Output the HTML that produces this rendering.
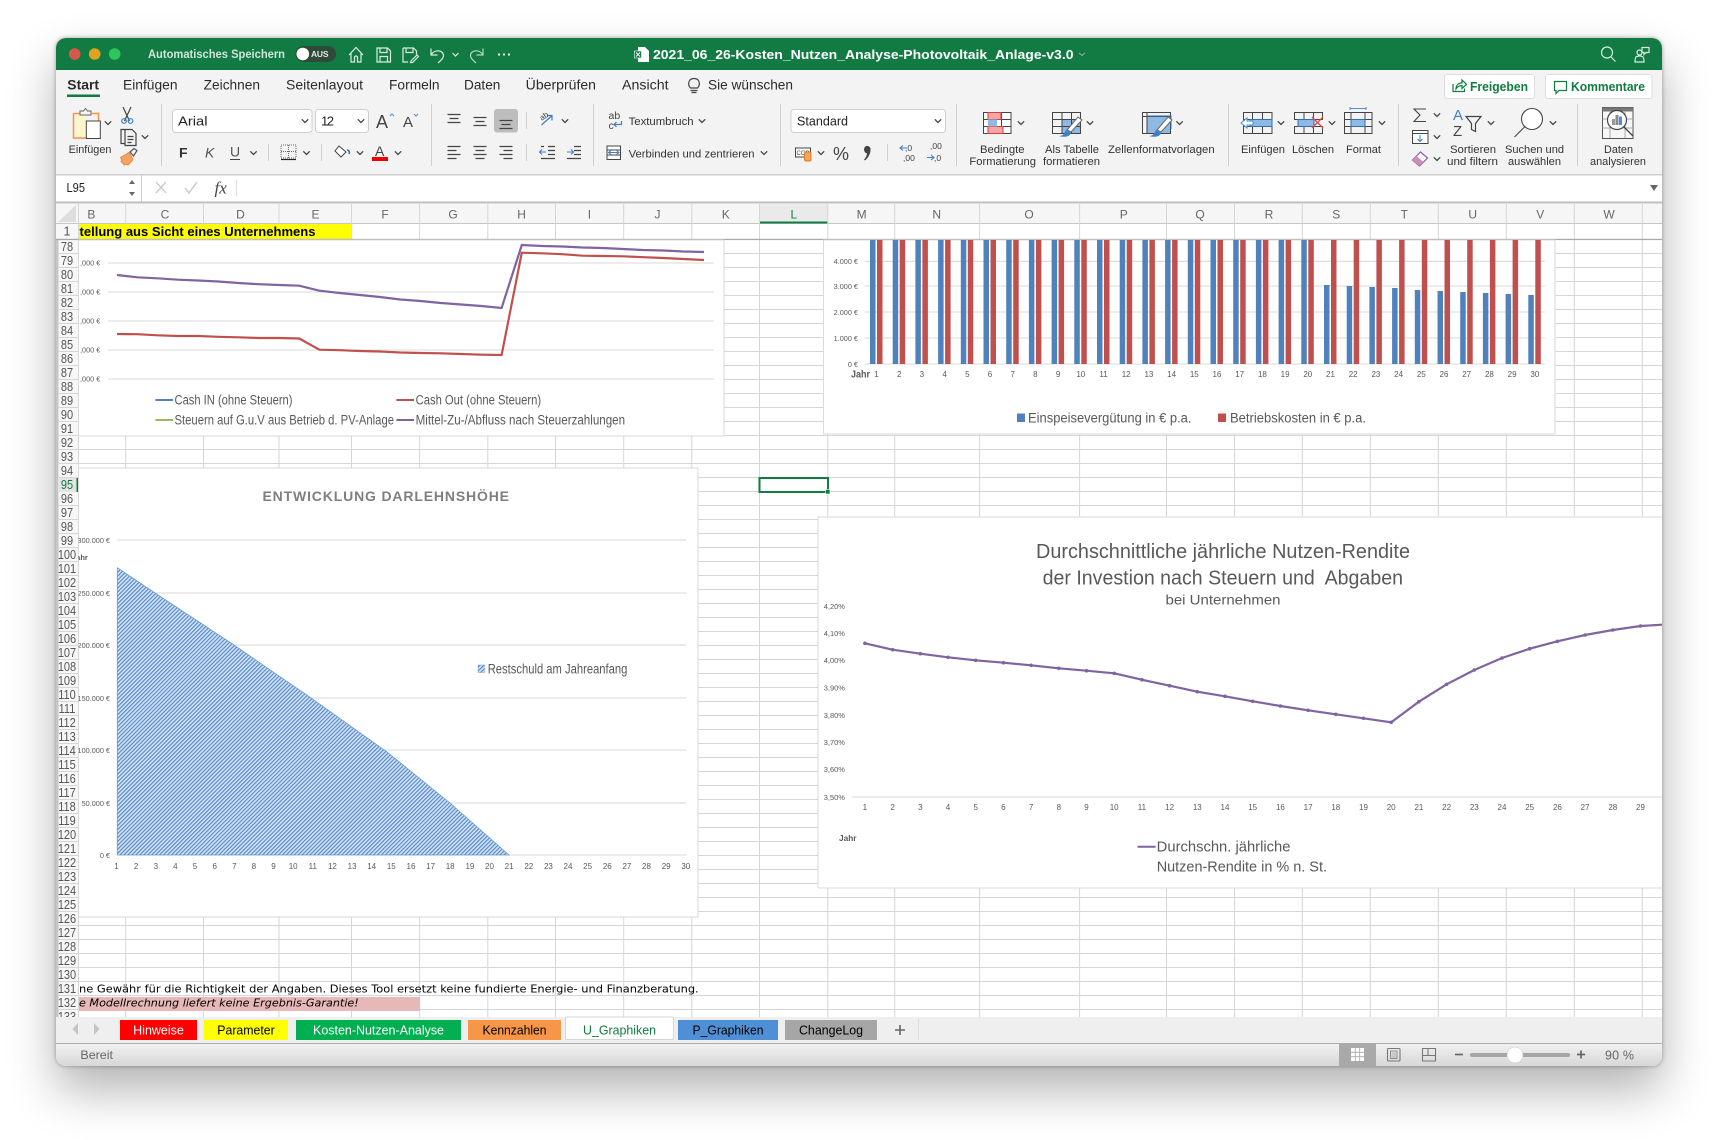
<!DOCTYPE html>
<html lang="de"><head><meta charset="utf-8"><title>Excel</title>
<style>
html,body{margin:0;padding:0;background:#fff;width:1718px;height:1140px;overflow:hidden}
#win{position:absolute;left:56px;top:38px;width:1606px;height:1028px;border-radius:10px;box-shadow:0 24px 48px rgba(0,0,0,.3),0 0 4px rgba(0,0,0,.35)}
svg{position:absolute;left:0;top:0}
svg text{font-family:"Liberation Sans",sans-serif}
#rows{position:absolute;left:47px;top:240px;width:40px;height:777px;overflow:hidden;text-align:center;font:12.5px/14px "Liberation Sans",sans-serif;color:#555;transform:scaleX(.88)}
.tab{font-size:13.5px;fill:#2b2b2b}
.rb{font-size:11px;fill:#333}
.ch{font-size:12px;fill:#666;text-anchor:middle}
.ax{font-size:8px;fill:#595959;text-anchor:middle}
.ay{font-size:7.3px;fill:#595959;text-anchor:end}
.lg{font-size:13.5px;fill:#595959}
.ic{fill:none;stroke:#444;stroke-width:1.2}
.wi{fill:none;stroke:#dcebe2;stroke-width:1.2}
</style></head><body>
<div id="win"></div>
<svg width="1718" height="1140" viewBox="0 0 1718 1140" xmlns="http://www.w3.org/2000/svg">
<defs>
<clipPath id="w"><rect x="56" y="38" width="1606" height="1028" rx="10"/></clipPath>
<clipPath id="c3"><rect x="78.5" y="468" width="620" height="449"/></clipPath>
<path id="c" d="M-3.2-1.7L0 1.5L3.2-1.7" fill="none" stroke="#444" stroke-width="1.3"/>
<pattern id="hl" x="58" y="240" width="1604" height="14" patternUnits="userSpaceOnUse"><path d="M0 13.5H1604" stroke="#d6d6d6"/></pattern>
<pattern id="hat" width="2.8" height="2.8" patternUnits="userSpaceOnUse" patternTransform="rotate(45)"><rect width="2.8" height="2.8" fill="#d3e2f4"/><rect width="1.1" height="2.8" fill="#4f86c8"/></pattern>
<marker id="m" markerWidth="5" markerHeight="5" refX="2.5" refY="2.5" markerUnits="userSpaceOnUse"><circle cx="2.5" cy="2.5" r="1.8" fill="#8064a2"/></marker>
</defs>
<g clip-path="url(#w)">
<rect x="56" y="38" width="1606" height="1028" fill="#fff"/>
<!-- title bar -->
<rect x="56" y="38" width="1606" height="32" fill="#117b43"/>
<circle cx="74.7" cy="54" r="5.8" fill="#d8574c"/><circle cx="94.7" cy="54" r="5.8" fill="#e0a223"/><circle cx="114.7" cy="54" r="5.8" fill="#2fc45c"/>
<text x="148" y="58" font-size="11.5" font-weight="bold" fill="#d2e4da" textLength="137" lengthAdjust="spacingAndGlyphs">Automatisches Speichern</text>
<rect x="295.5" y="46" width="40.5" height="16" rx="8" fill="#2f4a3a"/><circle cx="302.8" cy="54" r="6.3" fill="#fff"/>
<text x="311" y="57" font-size="8.5" font-weight="bold" fill="#dfe8e3" textLength="17.5">AUS</text>
<path class="wi" d="M349 55l7-7.5 7 7.5M351 53v9h3.5v-4.5a1.5 1.500 0 0 1 3 0V62H361v-9"/>
<path class="wi" d="M377 48h10.500l3 3v11H377zM380 48v4.500h7V48M380 62v-5.500h7.500V62"/>
<path class="wi" d="M403 48h10.500l3 3v3.500M403 48v14h5M406 48v4.500h7V48M411 61l6-6 1.500 1.500-6 6h-2z"/>
<path class="wi" d="M431 48.500v6.500h6.500M431.500 54.500c3-5.500 12-4.500 12 1 0 3-2.500 4.500-5.500 7.500"/>
<path d="M452.500 53l3 3 3-3" fill="none" stroke="#dcebe2" stroke-width="1.200"/>
<path class="wi" d="M483 48.500v6.500h-6.500M482.500 54.500c-3-5.500-12-4.500-12 1 0 3 2.500 4.500 5.500 7.500" opacity=".8"/>
<circle cx="499" cy="54.500" r="1.100" fill="#fff"/><circle cx="504" cy="54.500" r="1.100" fill="#fff"/><circle cx="509" cy="54.500" r="1.100" fill="#fff"/>
<path d="M638 47h7l4 4v11h-11z" fill="#fff"/><rect x="634.500" y="51" width="7" height="7" fill="#117b43" stroke="#fff" stroke-width=".6"/><path d="M636 52.500l4 4M640 52.500l-4 4" stroke="#fff" stroke-width=".9"/>
<text x="653" y="59" font-size="13" font-weight="bold" fill="#fff" textLength="420.500" lengthAdjust="spacingAndGlyphs">2021_06_26-Kosten_Nutzen_Analyse-Photovoltaik_Anlage-v3.0</text>
<path d="M1079 53l3 2.500 3-2.500" fill="none" stroke="#8db9a0" stroke-width="1"/>
<circle cx="1607" cy="52.500" r="5.500" class="wi"/><path class="wi" d="M1611 57l4.500 4.500"/>
<path class="wi" d="M1635 62c0-5 1-6 4.500-6s4.500 1 4.500 6zM1642 47.500h7v5h-3l-2 2v-2h-2z"/><circle cx="1639.500" cy="52.500" r="2.500" class="wi"/>
<!-- ribbon -->
<rect x="56" y="70" width="1606" height="104" fill="#f3f3f3"/>
<rect x="56" y="174" width="1606" height="1.500" fill="#cfcfcf"/>
<g class="tab">
<text x="67.300" y="89.500" font-weight="bold" textLength="31.700" lengthAdjust="spacingAndGlyphs">Start</text>
<text x="123" y="89.500" textLength="54.500" lengthAdjust="spacingAndGlyphs">Einfügen</text>
<text x="203.700" y="89.500" textLength="56.300" lengthAdjust="spacingAndGlyphs">Zeichnen</text>
<text x="286" y="89.500" textLength="77" lengthAdjust="spacingAndGlyphs">Seitenlayout</text>
<text x="389" y="89.500" textLength="50.600" lengthAdjust="spacingAndGlyphs">Formeln</text>
<text x="464" y="89.500" textLength="36.400" lengthAdjust="spacingAndGlyphs">Daten</text>
<text x="525.700" y="89.500" textLength="70.300" lengthAdjust="spacingAndGlyphs">Überprüfen</text>
<text x="622" y="89.500" textLength="46.600" lengthAdjust="spacingAndGlyphs">Ansicht</text>
<text x="708" y="89.500" textLength="85" lengthAdjust="spacingAndGlyphs">Sie wünschen</text>
</g>
<rect x="67" y="94.500" width="33" height="2.500" fill="#107c41"/>
<path class="ic" d="M690.500 90.500h7M691.500 92.500h5M690.500 88c-3-3-2.500-9.500 3.500-9.500s6.500 6.500 3.500 9.500z" stroke="#666"/>
<rect x="1444.500" y="74.500" width="90" height="24" rx="2.500" fill="#fff" stroke="#dcdcdc"/>
<rect x="1545.500" y="74.500" width="106.500" height="24" rx="2.500" fill="#fff" stroke="#dcdcdc"/>
<path d="M1453 84v7.500h11.500v-3M1456 89c0-4 2.500-6 6-6v-3l4.500 4.500-4.500 4v-3c-2.500 0-4.500 1-6 3.500z" fill="none" stroke="#107c41" stroke-width="1.200"/>
<text x="1470" y="91" font-size="12.500" font-weight="bold" fill="#107c41" textLength="58" lengthAdjust="spacingAndGlyphs">Freigeben</text>
<path d="M1554.500 81.500h12v9h-7.500l-3 3v-3h-1.500z" fill="none" stroke="#107c41" stroke-width="1.200"/>
<text x="1571" y="91" font-size="12.500" font-weight="bold" fill="#107c41" textLength="74" lengthAdjust="spacingAndGlyphs">Kommentare</text>
<!-- ribbon separators -->
<path d="M161.500 104v62M431.500 104v62M593.500 104v62M780.500 104v62M956.500 104v62M1228.500 104v62M1398.500 104v62M1577.500 104v62" stroke="#d0d0d0"/>
<path d="M268.500 144v17M321.500 144v17M526.500 112v17M526.500 144v17M887.500 144v17" stroke="#d0d0d0"/>
<!-- clipboard -->
<path d="M73.500 113.500h6M92 113.500h6.500v7M73.500 113.500v24.500h13" fill="none" stroke="#f0954a" stroke-width="1.500"/>
<rect x="75" y="115" width="11" height="22" fill="#fdf6c8"/>
<path d="M80 113v-2h3.500l2-2.500 2 2.500h3.500v4h-11z" fill="#f5f5f5" stroke="#666"/>
<rect x="86.300" y="121" width="14" height="17.500" fill="#fff" stroke="#444"/>
<use href="#c" x="108" y="123"/>
<text class="rb" x="68.600" y="153" textLength="42.800" lengthAdjust="spacingAndGlyphs">Einfügen</text>
<path class="ic" d="M123 107l6.500 14M131 107l-6.500 14"/><circle cx="124" cy="121" r="2.300" class="ic" style="stroke:#3e7fc8"/><circle cx="130.500" cy="121" r="2.300" class="ic" style="stroke:#3e7fc8"/>
<path class="ic" d="M125 129.500h-4v14h4M125 129.500h7l4 4v12h-11zM127.500 136.500h6M127.500 139.500h6M127.500 142.500h4"/>
<use href="#c" x="145" y="137"/>
<path d="M120.500 157.500l8.500-5 4 7-5 5.500-3-1-.5 1-3.500-3.500 1-1z" fill="#f4a268" stroke="#e98a3a"/><path d="M130 152l4-3.500 3 2-3.500 5.500z" fill="none" stroke="#555" stroke-width="1.200"/>
<!-- font -->
<rect x="172.500" y="109.500" width="139.500" height="23" rx="3" fill="#fff" stroke="#cfcfcf"/>
<text x="178" y="125.500" font-size="13" fill="#222" textLength="29.500" lengthAdjust="spacingAndGlyphs">Arial</text><use href="#c" x="305" y="121"/>
<rect x="315.500" y="109.500" width="53" height="23" rx="3" fill="#fff" stroke="#cfcfcf"/>
<text x="321" y="125.500" font-size="13" fill="#222" textLength="13">12</text><use href="#c" x="361" y="121"/>
<text x="376" y="128" font-size="18" fill="#444">A</text><path d="M390 116l2-2 2 2" fill="none" stroke="#4a8fd8" stroke-width="1"/>
<text x="403" y="127" font-size="15" fill="#444">A</text><path d="M414 114l2 2 2-2" fill="none" stroke="#4a8fd8" stroke-width="1"/>
<text x="179" y="157.500" font-size="14" font-weight="bold" fill="#333">F</text>
<text x="205" y="157.500" font-size="14" font-style="italic" fill="#555">K</text>
<text x="230" y="156.500" font-size="14" fill="#555">U</text><path d="M230 159.500h10" stroke="#444"/>
<use href="#c" x="253.500" y="153"/>
<rect x="281" y="145" width="15" height="13" fill="none" stroke="#666" stroke-dasharray="1 1"/><path d="M288.500 145v13M281 151.500h15" stroke="#666" stroke-dasharray="1 1"/><path d="M281 159.500h15" stroke="#222" stroke-width="1.200"/>
<use href="#c" x="306.500" y="153"/>
<path d="M339 146l7 6-5 5-6-6z" fill="#fff" stroke="#444"/><path d="M347 150c2 0 3 2 2 4" fill="none" stroke="#2f6fb8" stroke-width="1.600"/>
<use href="#c" x="360" y="153"/>
<text x="375" y="156" font-size="14" fill="#444">A</text><rect x="372" y="157" width="16" height="4" fill="#ee0000"/>
<use href="#c" x="398" y="153"/>
<!-- align -->
<rect x="494" y="109" width="24" height="23.500" rx="3" fill="#bdbdbd"/>
<path class="ic" d="M447.500 114.500h13M449.500 118.500h9M447.500 122.500h13"/><path class="ic" d="M473.500 117.500h13M475.500 121.500h9M473.500 125.500h13"/><path class="ic" d="M499.500 120.500h13M501.500 124.500h9M499.500 128.500h13"/>
<path d="M541.500 125l10-9M547 115.500h5v5" fill="none" stroke="#3e7fc8" stroke-width="1.200"/><text x="540" y="119" font-size="8" fill="#444" transform="rotate(-35 544 117)">ab</text>
<use href="#c" x="565" y="121"/>
<path class="ic" d="M447.500 146.500h13M447.500 150.500h9M447.500 154.500h13M447.500 158.500h9"/><path class="ic" d="M473.500 146.500h13M475.500 150.500h9M473.500 154.500h13M475.500 158.500h9"/><path class="ic" d="M499.500 146.500h13M503.500 150.500h9M499.500 154.500h13M503.500 158.500h9"/>
<path class="ic" d="M548 146.500h7M548 150.500h7M548 154.500h7M541 158.500h14M541 146.500h3"/><path d="M546 152h-6M542 149.500l-2.500 2.500 2.500 2.500" fill="none" stroke="#3e7fc8" stroke-width="1.100"/>
<path class="ic" d="M574 146.500h7M574 150.500h7M574 154.500h7M567 158.500h14"/><path d="M567 152h6M571 149.500l2.500 2.500-2.500 2.500" fill="none" stroke="#3e7fc8" stroke-width="1.100"/>
<text x="608.500" y="119" font-size="10.500" fill="#444">ab</text><text x="608.500" y="129" font-size="10.500" fill="#444">c</text>
<path d="M621.500 121v3.500h-7M616.500 122l-2.500 2.500 2.500 2.500" fill="none" stroke="#3e7fc8" stroke-width="1.200"/>
<text class="rb" x="628.600" y="125" textLength="65" lengthAdjust="spacingAndGlyphs">Textumbruch</text><use href="#c" x="702" y="121"/>
<rect x="607" y="146" width="13.500" height="13.500" fill="#fff" stroke="#444"/><path d="M607 150h13.500M607 155h13.500" stroke="#444"/><path d="M608.500 152.500h10.500M611 150.500l-2.500 2 2.500 2M616.500 150.500l2.500 2-2.500 2" fill="none" stroke="#3e7fc8"/>
<text class="rb" x="628.600" y="157.500" textLength="126" lengthAdjust="spacingAndGlyphs">Verbinden und zentrieren</text><use href="#c" x="764" y="153"/>
<!-- number -->
<rect x="791" y="109.500" width="154.500" height="23" rx="3" fill="#fff" stroke="#cfcfcf"/>
<text x="797" y="125.500" font-size="13" fill="#222" textLength="51" lengthAdjust="spacingAndGlyphs">Standard</text><use href="#c" x="938" y="121"/>
<rect x="795.500" y="148" width="15" height="9" fill="#fff" stroke="#444"/><text x="796.500" y="155" font-size="6" fill="#444">CCC</text><rect x="804.500" y="152" width="6.500" height="9" rx="1.500" fill="#f2a55c" stroke="#e07c20"/>
<use href="#c" x="821" y="153"/>
<text x="833" y="160" font-size="18" fill="#444">%</text>
<path d="M864 149a3.300 3.300 0 1 1 6.500 1c0 4-2.500 8-5.500 10.500l-1-.8c1.800-2 2.800-4 3-6.500-1.700.2-3-1.900-3-4.200z" fill="#444"/>
<text x="905" y="151" font-size="8.500" fill="#444">,0</text><text x="903" y="161" font-size="8.500" fill="#444">,00</text><path d="M907 148h-6.500M903 145.500l-3 2.500 3 2.500" fill="none" stroke="#3e7fc8" stroke-width="1.100"/>
<text x="930" y="149" font-size="8.500" fill="#444">,00</text><text x="934" y="161" font-size="8.500" fill="#444">,0</text><path d="M927 157.500h6.500M931 155l3 2.500-3 2.500" fill="none" stroke="#3e7fc8" stroke-width="1.100"/>
<!-- cond format -->
<rect x="983.500" y="112.500" width="27.500" height="21" fill="#fff"/><path d="M983.500 112.500h27.500v21h-27.500zM983.500 119.500h27.500M983.500 126.500h27.500M992.500 112.500v21M1001.500 112.500v21" fill="none" stroke="#444"/>
<rect x="988" y="112.500" width="13" height="7" fill="#f1a7a7" stroke="#e23a3a"/><rect x="988" y="126.500" width="15" height="7" fill="#f1a7a7" stroke="#e23a3a"/><rect x="988" y="119.500" width="9" height="7" fill="#8db9e4"/>
<use href="#c" x="1021" y="123"/>
<text class="rb" x="980" y="153" textLength="44.500" lengthAdjust="spacingAndGlyphs">Bedingte</text>
<text class="rb" x="969.400" y="165" textLength="66.600" lengthAdjust="spacingAndGlyphs">Formatierung</text>
<!-- table -->
<rect x="1062" y="119" width="19" height="14" fill="#8db9e4"/><path d="M1052.500 112.500h28v21h-28zM1052.500 119.500h28M1052.500 126.500h28M1062 112.500v21M1071.500 112.500v21" fill="none" stroke="#444"/>
<path d="M1067 130l11-13 4 3-11 12z" fill="#fff" stroke="#666"/><path d="M1059 136c4 0 5-2 7-6l5 3c-1 3-5 5-12 3z" fill="#3e7fc8"/>
<use href="#c" x="1090" y="123"/>
<text class="rb" x="1045" y="153" textLength="54" lengthAdjust="spacingAndGlyphs">Als Tabelle</text>
<text class="rb" x="1043" y="165" textLength="57" lengthAdjust="spacingAndGlyphs">formatieren</text>
<rect x="1147" y="116" width="24" height="17" fill="#8db9e4"/><path d="M1142.500 112.500h28v21h-28zM1147 112.500v21M1142.500 116.500h28" fill="none" stroke="#444"/><path d="M1147 116h24v13" fill="none" stroke="#2f6fb8"/>
<path d="M1157 130l11-13 4 3-11 12z" fill="#fff" stroke="#666"/><path d="M1149 136c4 0 5-2 7-6l5 3c-1 3-5 5-12 3z" fill="#3e7fc8"/>
<use href="#c" x="1179.600" y="123"/>
<text class="rb" x="1108" y="153" textLength="106.700" lengthAdjust="spacingAndGlyphs">Zellenformatvorlagen</text>
<!-- cells -->
<path d="M1243.500 112.500h28.500v21h-28.500zM1243.500 119.500h28.500M1243.500 126.500h28.500M1252.500 112.500v21M1262.500 112.500v21" fill="none" stroke="#444"/>
<rect x="1250" y="119.500" width="22" height="7" fill="#8db9e4" stroke="#2f6fb8"/><path d="M1241 123l6-5v3h6v4h-6v3z" fill="#fff" stroke="#4a8fd8"/>
<use href="#c" x="1281" y="123"/>
<text class="rb" x="1241" y="153" textLength="44" lengthAdjust="spacingAndGlyphs">Einfügen</text>
<path d="M1294.500 112.500h28v7h-28zM1294.500 126.500h28v7h-28zM1304 112.500v7M1313.500 112.500v7M1304 126.500v7M1313.500 126.500v7" fill="none" stroke="#444"/>
<rect x="1298" y="119.500" width="16" height="7" fill="#8db9e4" stroke="#2f6fb8"/><path d="M1312 117l11 11M1323 117l-11 11" stroke="#e24a4a" stroke-width="1.300"/>
<use href="#c" x="1332" y="123"/>
<text class="rb" x="1292" y="153" textLength="42" lengthAdjust="spacingAndGlyphs">Löschen</text>
<path d="M1350 108.500h16M1350 107v3M1366 107v3" stroke="#4a8fd8"/>
<path d="M1344.500 112.500h27.500v21h-27.500zM1344.500 119.500h27.500M1344.500 126.500h27.500M1351 112.500v21M1365 112.500v21" fill="none" stroke="#444"/>
<rect x="1351" y="119.500" width="14" height="7" fill="#8db9e4" stroke="#2f6fb8"/>
<use href="#c" x="1382" y="123"/>
<text class="rb" x="1346" y="153" textLength="35" lengthAdjust="spacingAndGlyphs">Format</text>
<!-- editing -->
<path d="M1426 109h-12l6 6-6 6.500h12" fill="none" stroke="#444" stroke-width="1.100"/><use href="#c" x="1437" y="115"/>
<rect x="1412.500" y="130.500" width="15.500" height="13" fill="#fff" stroke="#444"/><path d="M1412.500 133.500h15.500" stroke="#444"/><path d="M1420 135v6M1417.500 139l2.500 2.500 2.500-2.500" fill="none" stroke="#3e7fc8"/><use href="#c" x="1437" y="137"/>
<path d="M1412.500 160l8-8 7 6-8 8z" fill="#fff" stroke="#8a5fb0" stroke-width="1.200"/><path d="M1412.500 160l4-4 7 6-4 4z" fill="#cf8fb0"/><use href="#c" x="1437" y="159"/>
<text x="1453" y="120" font-size="15" fill="#3e7fc8">A</text><text x="1453" y="136" font-size="15" fill="#444">Z</text>
<path d="M1466 116.500h15l-5.500 7v8l-4-2v-6z" fill="none" stroke="#444" stroke-width="1.200"/><use href="#c" x="1491" y="123"/>
<text class="rb" x="1450" y="153" textLength="46" lengthAdjust="spacingAndGlyphs">Sortieren</text>
<text class="rb" x="1447" y="165" textLength="51" lengthAdjust="spacingAndGlyphs">und filtern</text>
<circle cx="1532" cy="119" r="10.500" fill="#fff" stroke="#444" stroke-width="1.100"/><path d="M1524.500 127l-10 10" stroke="#444" stroke-width="1.100"/><use href="#c" x="1553" y="123"/>
<text class="rb" x="1505" y="153" textLength="59" lengthAdjust="spacingAndGlyphs">Suchen und</text>
<text class="rb" x="1508" y="165" textLength="53" lengthAdjust="spacingAndGlyphs">auswählen</text>
<rect x="1602.500" y="107.500" width="30.500" height="31" fill="#f7f7f7" stroke="#555"/><rect x="1602.500" y="107.500" width="30.500" height="4" fill="#777"/>
<path d="M1602.500 119h30.500M1602.500 128h30.500M1610 111v27M1625 111v27" stroke="#aaa"/><circle cx="1617" cy="120" r="9.500" fill="#fff" stroke="#444" stroke-width="1.200"/><path d="M1624 127l9 9" stroke="#444" stroke-width="1.300"/>
<rect x="1612" y="119" width="3" height="6" fill="#999"/><rect x="1615.500" y="115" width="3" height="10" fill="#8b8b8b"/><rect x="1619" y="116.500" width="3" height="8.500" fill="#4a8fd8"/>
<text class="rb" x="1604" y="153" textLength="29" lengthAdjust="spacingAndGlyphs">Daten</text>
<text class="rb" x="1590" y="165" textLength="56" lengthAdjust="spacingAndGlyphs">analysieren</text>
<!-- formula bar -->
<rect x="56" y="175.500" width="1606" height="26" fill="#fff"/>
<path d="M141.500 175.500v26" stroke="#cfcfcf"/>
<text x="66.500" y="192" font-size="12.500" fill="#222" textLength="18.500" lengthAdjust="spacingAndGlyphs">L95</text>
<path d="M129 184l3-4 3 4zM129 192l3 4 3-4z" fill="#666"/>
<path d="M156 182l10 11M166 182l-10 11" stroke="#ccc" stroke-width="1.500"/><path d="M185 188l4 5 8-11" fill="none" stroke="#ccc" stroke-width="1.500"/>
<text x="214.500" y="193.500" font-size="17" font-style="italic" style="font-family:'Liberation Serif',serif" fill="#444">fx</text>
<path d="M236.500 180v16" stroke="#ddd"/><path d="M1650 185h8l-4 6z" fill="#666"/>
<rect x="56" y="201.500" width="1606" height="2" fill="#bdbdbd"/>
<!-- col header -->
<rect x="56" y="204" width="1606" height="19" fill="#f6f6f6"/>
<rect x="56" y="223" width="1606" height="1" fill="#c6c6c6"/>
<path d="M58 222V205H76z" fill="#dedede" transform="rotate(180 67 213.500)"/>
<rect x="759" y="204" width="69" height="19" fill="#eaeaea"/><rect x="759" y="221.500" width="69" height="2" fill="#107c41"/>
<!-- grid -->
<rect x="56" y="224" width="22" height="793" fill="#f7f7f7"/>
<rect x="56" y="240" width="2.500" height="777" fill="#c6c6c6"/>
<rect x="58" y="240" width="1604" height="777" fill="url(#hl)"/>
<rect x="58" y="478" width="20" height="14" fill="#e4e4e4"/><rect x="76.500" y="478" width="2" height="14" fill="#107c41"/>
<path d="M78.500 204V1017M125.700 204V1017M203.500 204V1017M279 204V1017M351.500 204V1017M419.600 204V1017M487.800 204V1017M555.500 204V1017M623.700 204V1017M691.800 204V1017M759.500 204V1017M827.800 204V1017M894.700 204V1017M979.600 204V1017M1079.600 204V1017M1166.500 204V1017M1234.500 204V1017M1302.300 204V1017M1370.300 204V1017M1438.300 204V1017M1506.300 204V1017M1574.300 204V1017M1642.300 204V1017" stroke="#d6d6d6"/>
<rect x="79" y="224" width="272.500" height="15" fill="#ffff00"/>
<rect x="56" y="238.800" width="1606" height="1.300" fill="#a8a8a8"/>
<g transform="translate(0 218.500)">
<text class="ch" x="91.400">B</text><text class="ch" x="165">C</text><text class="ch" x="240.400">D</text><text class="ch" x="315.500">E</text><text class="ch" x="385">F</text><text class="ch" x="453">G</text><text class="ch" x="521.600">H</text><text class="ch" x="589.400">I</text><text class="ch" x="657.500">J</text><text class="ch" x="725.700">K</text><text class="ch" x="793.900" style="fill:#107c41">L</text><text class="ch" x="861.600">M</text><text class="ch" x="936.700">N</text><text class="ch" x="1029">O</text><text class="ch" x="1123.700">P</text><text class="ch" x="1200">Q</text><text class="ch" x="1269">R</text><text class="ch" x="1336.300">S</text><text class="ch" x="1404.300">T</text><text class="ch" x="1472.700">U</text><text class="ch" x="1540.300">V</text><text class="ch" x="1609">W</text>
</g>
<text x="67" y="235.500" font-size="12.500" fill="#555" text-anchor="middle">1</text>
<text x="79.500" y="236" font-size="13" font-weight="bold" fill="#000" textLength="236" lengthAdjust="spacingAndGlyphs">tellung aus Sicht eines Unternehmens</text>
<!-- selection -->
<rect x="759.500" y="478" width="68.500" height="14" fill="#fff" stroke="#107c41" stroke-width="2"/><rect x="825.500" y="489.500" width="4.500" height="4.500" fill="#107c41" stroke="#fff" stroke-width=".6"/>
<!-- chart 1 -->
<rect x="78.500" y="240" width="645.500" height="196" fill="#fff" stroke="#d9d9d9"/>
<path d="M108 263H714M108 292H714M108 321H714M108 350H714M108 379H714" stroke="#d9d9d9" stroke-width="1.100"/>
<text x="80" y="265.500" font-size="7.300" fill="#595959">,000 €</text><text x="80" y="294.500" font-size="7.300" fill="#595959">,000 €</text><text x="80" y="323.500" font-size="7.300" fill="#595959">,000 €</text><text x="80" y="352.500" font-size="7.300" fill="#595959">,000 €</text><text x="80" y="381.500" font-size="7.300" fill="#595959">,000 €</text>
<polyline fill="none" stroke="#c0504d" stroke-width="2.200" points="117,334 137.200,334.200 157.500,335.300 177.700,336 198,336 218.200,336.800 238.400,337.300 258.700,338 278.900,338 299.200,338.500 319.400,349.700 339.600,350.200 359.900,351 380.100,351.500 400.400,352.500 420.600,353 440.800,353.300 461.100,354 481.300,354.700 501.600,355 521.800,252.700 542,253.300 562.300,254.200 582.500,255.700 602.800,256 623,256.300 643.200,257.200 663.500,258 683.700,259 704,260"/>
<polyline fill="none" stroke="#8064a2" stroke-width="2.200" points="117,275 137.200,277.300 157.500,278.300 177.700,279.700 198,280.500 218.200,281.500 238.400,283 258.700,284.200 278.900,285 299.200,285.700 319.400,290.700 339.600,293 359.900,295 380.100,297 400.400,299.500 420.600,301 440.800,303 461.100,304.500 481.300,306 501.600,308 521.800,245 542,246 562.300,246.500 582.500,247.500 602.800,248 623,249 643.200,250 663.500,250.500 683.700,251.500 704,252"/>
<path d="M155.400 400H173" stroke="#4f81bd" stroke-width="2"/><path d="M396.400 400H414" stroke="#c0504d" stroke-width="2"/><path d="M155.400 420H173" stroke="#9bbb59" stroke-width="2"/><path d="M396.400 420H414" stroke="#8064a2" stroke-width="2"/>
<text class="lg" x="174.500" y="404.500" textLength="118" lengthAdjust="spacingAndGlyphs">Cash IN (ohne Steuern)</text>
<text class="lg" x="415.600" y="404.500" textLength="125.500" lengthAdjust="spacingAndGlyphs">Cash Out (ohne Steuern)</text>
<text class="lg" x="174.500" y="424.500" textLength="219.500" lengthAdjust="spacingAndGlyphs">Steuern auf G.u.V aus Betrieb d. PV-Anlage</text>
<text class="lg" x="415.600" y="424.500" textLength="209.500" lengthAdjust="spacingAndGlyphs">Mittel-Zu-/Abfluss nach Steuerzahlungen</text>
<!-- chart 2 -->
<rect x="823.500" y="240" width="731.500" height="194" fill="#fff" stroke="#d9d9d9"/>
<path d="M864.700 261.300H1545M864.700 286H1545M864.700 312H1545M864.700 338H1545M864.700 364H1545" stroke="#d9d9d9" stroke-width="1.100"/>
<g transform="translate(0 264)"><text class="ay" x="858">4.000 €</text></g><g transform="translate(0 289)"><text class="ay" x="858">3.000 €</text></g><g transform="translate(0 315)"><text class="ay" x="858">2.000 €</text></g><g transform="translate(0 341)"><text class="ay" x="858">1.000 €</text></g><g transform="translate(0 367)"><text class="ay" x="858">0 €</text></g>
<path fill="#4f81bd" d="M870 240h5.500v124h-5.500zM892.700 240h5.500v124h-5.500zM915.400 240h5.500v124h-5.500zM938.100 240h5.500v124h-5.500zM960.800 240h5.500v124h-5.500zM983.500 240h5.500v124h-5.500zM1006.200 240h5.500v124h-5.500zM1028.900 240h5.500v124h-5.500zM1051.600 240h5.500v124h-5.500zM1074.300 240h5.500v124h-5.500zM1097 240h5.500v124h-5.500zM1119.700 240h5.500v124h-5.500zM1142.400 240h5.500v124h-5.500zM1165.100 240h5.500v124h-5.500zM1187.800 240h5.500v124h-5.500zM1210.500 240h5.500v124h-5.500zM1233.200 240h5.500v124h-5.500zM1255.900 240h5.500v124h-5.500zM1278.600 240h5.500v124h-5.500zM1301.300 240h5.500v124h-5.500zM1324 285h5.500v79h-5.500zM1346.700 286h5.500v78h-5.500zM1369.400 287h5.500v77h-5.500zM1392.100 288h5.500v76h-5.500zM1414.800 290h5.500v74h-5.500zM1437.500 291h5.500v73h-5.500zM1460.200 292h5.500v72h-5.500zM1482.900 293h5.500v71h-5.500zM1505.600 294h5.500v70h-5.500zM1528.300 295h5.500v69h-5.500z"/>
<path fill="#c0504d" d="M877 240h5.500v124h-5.500zM899.700 240h5.500v124h-5.500zM922.400 240h5.500v124h-5.500zM945.100 240h5.500v124h-5.500zM967.800 240h5.500v124h-5.500zM990.500 240h5.500v124h-5.500zM1013.200 240h5.500v124h-5.500zM1035.900 240h5.500v124h-5.500zM1058.600 240h5.500v124h-5.500zM1081.300 240h5.500v124h-5.500zM1104 240h5.500v124h-5.500zM1126.700 240h5.500v124h-5.500zM1149.400 240h5.500v124h-5.500zM1172.100 240h5.500v124h-5.500zM1194.800 240h5.500v124h-5.500zM1217.500 240h5.500v124h-5.500zM1240.200 240h5.500v124h-5.500zM1262.900 240h5.500v124h-5.500zM1285.600 240h5.500v124h-5.500zM1308.300 240h5.500v124h-5.500zM1331 240h5.500v124h-5.500zM1353.700 240h5.500v124h-5.500zM1376.400 240h5.500v124h-5.500zM1399.100 240h5.500v124h-5.500zM1421.800 240h5.500v124h-5.500zM1444.500 240h5.500v124h-5.500zM1467.200 240h5.500v124h-5.500zM1489.900 240h5.500v124h-5.500zM1512.600 240h5.500v124h-5.500zM1535.300 240h5.500v124h-5.500z"/>
<g transform="translate(0 377)">
<text class="ax" x="876.500">1</text><text class="ax" x="899.200">2</text><text class="ax" x="921.900">3</text><text class="ax" x="944.600">4</text><text class="ax" x="967.300">5</text><text class="ax" x="990">6</text><text class="ax" x="1012.700">7</text><text class="ax" x="1035.400">8</text><text class="ax" x="1058.100">9</text><text class="ax" x="1080.800">10</text><text class="ax" x="1103.500">11</text><text class="ax" x="1126.200">12</text><text class="ax" x="1148.900">13</text><text class="ax" x="1171.600">14</text><text class="ax" x="1194.300">15</text><text class="ax" x="1217">16</text><text class="ax" x="1239.700">17</text><text class="ax" x="1262.400">18</text><text class="ax" x="1285.100">19</text><text class="ax" x="1307.800">20</text><text class="ax" x="1330.500">21</text><text class="ax" x="1353.200">22</text><text class="ax" x="1375.900">23</text><text class="ax" x="1398.600">24</text><text class="ax" x="1421.300">25</text><text class="ax" x="1444">26</text><text class="ax" x="1466.700">27</text><text class="ax" x="1489.400">28</text><text class="ax" x="1512.100">29</text><text class="ax" x="1534.800">30</text>
</g>
<text x="851" y="377.500" font-size="10" font-weight="bold" fill="#595959" textLength="19" lengthAdjust="spacingAndGlyphs">Jahr</text>
<rect x="1017" y="413.500" width="8" height="8.500" fill="#4f81bd"/><rect x="1218" y="413.500" width="8" height="8.500" fill="#c0504d"/>
<text class="lg" x="1028" y="422.500" textLength="163.500" lengthAdjust="spacingAndGlyphs">Einspeisevergütung in € p.a.</text>
<text class="lg" x="1230" y="422.500" textLength="136" lengthAdjust="spacingAndGlyphs">Betriebskosten in € p.a.</text>
<!-- chart 3 -->
<rect x="78.500" y="468" width="619.500" height="449" fill="#fff" stroke="#d9d9d9"/>
<text x="262.500" y="501" font-size="14" font-weight="bold" fill="#7f7f7f" textLength="246.500">ENTWICKLUNG DARLEHNSHÖHE</text>
<path d="M117.300 540H686.400M117.300 593H686.400M117.300 645H686.400M117.300 698H686.400M117.300 750H686.400M117.300 803H686.400M117.300 855H686.400" stroke="#d9d9d9" stroke-width="1.100"/>
<g clip-path="url(#c3)">
<g transform="translate(0 543)"><text class="ay" x="110">300.000 €</text></g><g transform="translate(0 596)"><text class="ay" x="110">250.000 €</text></g><g transform="translate(0 648)"><text class="ay" x="110">200.000 €</text></g><g transform="translate(0 701)"><text class="ay" x="110">150.000 €</text></g><g transform="translate(0 753)"><text class="ay" x="110">100.000 €</text></g>
<text x="72" y="560" font-size="7.500" font-weight="bold" fill="#595959">Jahr</text>
</g>
<g transform="translate(0 806)"><text class="ay" x="110">50.000 €</text></g><g transform="translate(0 858)"><text class="ay" x="110">0 €</text></g>
<polygon points="117.300,567.700 155,593 231,643 311,698 387,752 450,803 509,855 117.300,855" fill="url(#hat)" stroke="#6a9ad0" stroke-width=".8"/>
<g transform="translate(0 869)">
<text class="ax" x="116.500">1</text><text class="ax" x="136.100">2</text><text class="ax" x="155.800">3</text><text class="ax" x="175.400">4</text><text class="ax" x="195">5</text><text class="ax" x="214.700">6</text><text class="ax" x="234.300">7</text><text class="ax" x="253.900">8</text><text class="ax" x="273.500">9</text><text class="ax" x="293.200">10</text><text class="ax" x="312.800">11</text><text class="ax" x="332.400">12</text><text class="ax" x="352.100">13</text><text class="ax" x="371.700">14</text><text class="ax" x="391.300">15</text><text class="ax" x="411">16</text><text class="ax" x="430.600">17</text><text class="ax" x="450.200">18</text><text class="ax" x="469.900">19</text><text class="ax" x="489.500">20</text><text class="ax" x="509.100">21</text><text class="ax" x="528.800">22</text><text class="ax" x="548.400">23</text><text class="ax" x="568">24</text><text class="ax" x="587.600">25</text><text class="ax" x="607.300">26</text><text class="ax" x="626.900">27</text><text class="ax" x="646.500">28</text><text class="ax" x="666.200">29</text><text class="ax" x="685.800">30</text>
</g>
<rect x="478" y="665" width="6.500" height="7.500" fill="url(#hat)" stroke="#6a9ad0" stroke-width=".5"/>
<text class="lg" x="487.700" y="673.500" textLength="139.700" lengthAdjust="spacingAndGlyphs">Restschuld am Jahreanfang</text>
<!-- chart 4 -->
<rect x="818" y="517" width="846" height="371" fill="#fff" stroke="#d9d9d9"/>
<text x="1036" y="558" font-size="20.500" fill="#595959" textLength="374" lengthAdjust="spacingAndGlyphs">Durchschnittliche jährliche Nutzen-Rendite</text>
<text x="1042.600" y="584.500" font-size="20.500" fill="#595959" textLength="360.400" lengthAdjust="spacingAndGlyphs">der Investion nach Steuern und&#160; Abgaben</text>
<text x="1165.500" y="604.500" font-size="14" fill="#595959" textLength="115" lengthAdjust="spacingAndGlyphs">bei Unternehmen</text>
<g font-size="7.500" fill="#595959">
<text x="823.700" y="609">4,20%</text><text x="823.700" y="636">4,10%</text><text x="823.700" y="663">4,00%</text><text x="823.700" y="690.500">3,90%</text><text x="823.700" y="718">3,80%</text><text x="823.700" y="745">3,70%</text><text x="823.700" y="772">3,60%</text><text x="823.700" y="800">3,50%</text>
</g>
<path d="M851.700 797H1662" stroke="#d9d9d9" stroke-width="1.100"/>
<polyline fill="none" stroke="#8064a2" stroke-width="2.200" marker-start="url(#m)" marker-mid="url(#m)" points="864.900,643.300 892.600,649.700 920.300,653.700 948,657.300 975.700,660.300 1003.400,662.700 1031.100,665.300 1058.800,668.300 1086.500,670.700 1114.200,673.300 1141.900,679.700 1169.600,685.700 1197.300,691.700 1225,696.300 1252.700,701.300 1280.400,706 1308.100,710.300 1335.800,714.300 1363.500,718.300 1391.200,722.300 1418.900,701.700 1446.600,684.300 1474.300,670 1502,658 1529.700,648.700 1557.400,641.300 1585.100,635 1612.800,630 1640.500,626 1668.200,624.300"/>
<g transform="translate(0 810)">
<text class="ax" x="864.900">1</text><text class="ax" x="892.600">2</text><text class="ax" x="920.300">3</text><text class="ax" x="948">4</text><text class="ax" x="975.700">5</text><text class="ax" x="1003.400">6</text><text class="ax" x="1031.100">7</text><text class="ax" x="1058.800">8</text><text class="ax" x="1086.500">9</text><text class="ax" x="1114.200">10</text><text class="ax" x="1141.900">11</text><text class="ax" x="1169.600">12</text><text class="ax" x="1197.300">13</text><text class="ax" x="1225">14</text><text class="ax" x="1252.700">15</text><text class="ax" x="1280.400">16</text><text class="ax" x="1308.100">17</text><text class="ax" x="1335.800">18</text><text class="ax" x="1363.500">19</text><text class="ax" x="1391.200">20</text><text class="ax" x="1418.900">21</text><text class="ax" x="1446.600">22</text><text class="ax" x="1474.300">23</text><text class="ax" x="1502">24</text><text class="ax" x="1529.700">25</text><text class="ax" x="1557.400">26</text><text class="ax" x="1585.100">27</text><text class="ax" x="1612.800">28</text><text class="ax" x="1640.500">29</text>
</g>
<text x="839" y="841" font-size="8.500" font-weight="bold" fill="#595959" textLength="17.500" lengthAdjust="spacingAndGlyphs">Jahr</text>
<path d="M1137.500 846.700H1155.600" stroke="#8064a2" stroke-width="2"/>
<text x="1156.700" y="851.500" font-size="14.500" fill="#595959" textLength="133.800" lengthAdjust="spacingAndGlyphs">Durchschn. jährliche</text>
<text x="1156.700" y="871.500" font-size="14.500" fill="#595959" textLength="170.300" lengthAdjust="spacingAndGlyphs">Nutzen-Rendite in % n. St.</text>
<!-- row 131/132 -->
<rect x="79" y="997" width="341" height="14" fill="#e6b8b7"/>
<text x="79" y="992.500" font-size="10.500" style="font-family:'DejaVu Sans',sans-serif" fill="#000" textLength="619.700" lengthAdjust="spacingAndGlyphs">ne Gewähr für die Richtigkeit der Angaben. Dieses Tool ersetzt keine fundierte Energie- und Finanzberatung.</text>
<text x="79" y="1006.500" font-size="10.500" font-style="italic" style="font-family:'DejaVu Sans',sans-serif" fill="#000" textLength="279.800" lengthAdjust="spacingAndGlyphs">e Modellrechnung liefert keine Ergebnis-Garantie!</text>
<!-- tab bar -->
<rect x="56" y="1017" width="1606" height="26" fill="#efefef"/>
<path d="M78 1023l-5.500 6 5.500 6zM94 1023l5.500 6-5.500 6z" fill="#c4c4c4"/>
<g font-size="12.500" text-anchor="middle">
<rect x="120" y="1020" width="77" height="20" fill="#ff0000"/><text x="158.500" y="1034.500" fill="#fff" textLength="50.700" lengthAdjust="spacingAndGlyphs">Hinweise</text>
<rect x="203.800" y="1020" width="84.200" height="20" fill="#ffff00"/><text x="246" y="1034.500" fill="#000" textLength="57.500" lengthAdjust="spacingAndGlyphs">Parameter</text>
<rect x="296" y="1020" width="165" height="20" fill="#00b050"/><text x="378.500" y="1034.500" fill="#fff" textLength="131" lengthAdjust="spacingAndGlyphs">Kosten-Nutzen-Analyse</text>
<rect x="468" y="1020" width="93" height="20" fill="#f79646"/><text x="514.500" y="1034.500" fill="#000" textLength="64" lengthAdjust="spacingAndGlyphs">Kennzahlen</text>
<rect x="565.500" y="1017" width="108" height="22.500" rx="1.500" fill="#fff" stroke="#c9c9c9" stroke-width=".7"/><text x="619.500" y="1034.500" fill="#107c41" textLength="73" lengthAdjust="spacingAndGlyphs">U_Graphiken</text>
<rect x="678" y="1020" width="100" height="20" fill="#4f8fd6"/><text x="728" y="1034.500" fill="#000" textLength="71" lengthAdjust="spacingAndGlyphs">P_Graphiken</text>
<rect x="785" y="1020" width="92" height="20" fill="#a6a6a6"/><text x="831" y="1034.500" fill="#000" textLength="64" lengthAdjust="spacingAndGlyphs">ChangeLog</text>
</g>
<path d="M895 1030h10M900 1025v10" stroke="#666" stroke-width="1.600"/><path d="M918.500 1018v22" stroke="#ddd"/>
<!-- status -->
<defs><linearGradient id="sb" x1="0" y1="0" x2="0" y2="1"><stop offset="0" stop-color="#f2f2f2"/><stop offset="1" stop-color="#d7d7d7"/></linearGradient></defs>
<rect x="56" y="1043" width="1606" height="23" fill="url(#sb)"/><rect x="56" y="1043" width="1606" height="1" fill="#adadad"/>
<text x="80.400" y="1059" font-size="12" fill="#666" textLength="32.600" lengthAdjust="spacingAndGlyphs">Bereit</text>
<rect x="1339" y="1043.500" width="37" height="22.500" fill="#a9a9a9"/>
<rect x="1351" y="1048" width="13" height="13" fill="#fff"/><path d="M1355.300 1048v13M1359.700 1048v13M1351 1052.300h13M1351 1056.700h13" stroke="#a9a9a9" stroke-width=".8"/>
<rect x="1387.500" y="1048.500" width="12.500" height="12.500" rx="1" fill="none" stroke="#777" stroke-width="1.100"/><rect x="1390.500" y="1051" width="6.500" height="7.500" fill="none" stroke="#777" stroke-width=".8"/><path d="M1391.500 1053h4.500M1391.500 1055h4.500M1391.500 1057h4.500" stroke="#777" stroke-width=".6"/>
<path d="M1422.500 1048.500h13v12.500h-13zM1422.500 1055.500h13M1428 1048.500v7" fill="none" stroke="#777" stroke-width="1.100"/>
<path d="M1455 1054.500h8" stroke="#666" stroke-width="1.700"/>
<rect x="1470" y="1053" width="100" height="4" rx="2" fill="#a6a6a6"/><circle cx="1515" cy="1055" r="8" fill="#fff" stroke="#c5c5c5" stroke-width=".5"/>
<path d="M1577 1054.500h8M1581 1050.500v8" stroke="#666" stroke-width="1.700"/>
<text x="1605" y="1059.500" font-size="12.500" fill="#666" textLength="29">90 %</text>
</g>
</svg>
<div id="rows">78<br>79<br>80<br>81<br>82<br>83<br>84<br>85<br>86<br>87<br>88<br>89<br>90<br>91<br>92<br>93<br>94<br><span style="color:#107c41">95</span><br>96<br>97<br>98<br>99<br>100<br>101<br>102<br>103<br>104<br>105<br>106<br>107<br>108<br>109<br>110<br>111<br>112<br>113<br>114<br>115<br>116<br>117<br>118<br>119<br>120<br>121<br>122<br>123<br>124<br>125<br>126<br>127<br>128<br>129<br>130<br>131<br>132<br>133</div>
</body></html>
